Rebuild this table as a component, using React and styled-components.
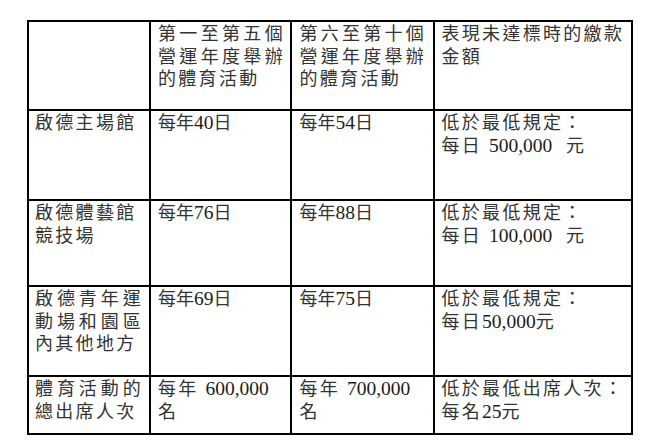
import React from 'react';
import styled, { createGlobalStyle } from 'styled-components';

const GlobalStyle = createGlobalStyle`
  html, body {
    margin: 0;
    padding: 0;
    background: #ffffff;
  }
  body {
    font-family: "Liberation Serif", "Noto Sans CJK TC", serif;
  }
`;

const Page = styled.div`
  box-sizing: border-box;
  width: 665px;
  height: 446px;
  padding: 20px 0 0 27px;
  background: #ffffff;
`;

const Table = styled.div`
  display: grid;
  grid-template-columns: 122px 141px 143px 198px;
  grid-template-rows: 89px 90px 86px 90px 58px;
  box-sizing: border-box;
  width: 606px;
  border-top: 2px solid #000;
  border-left: 2px solid #000;
  font-size: 18px;
  line-height: 22.5px;
  color: #333;
`;

const Cell = styled.div`
  min-width: 0;
  overflow: hidden;
  border-right: 2px solid #000;
  border-bottom: 2px solid #000;
  padding: 1px ${(p) => p.$pr}px 0 ${(p) => p.$pl}px;
  letter-spacing: ${(p) => p.$tracking}px;
`;

const Line = styled.span`
  display: block;
  text-align: ${(p) => (p.$justify ? 'justify' : 'left')};
  text-align-last: ${(p) => (p.$justify ? 'justify' : 'auto')};
`;

const Num = styled.span`
  font-size: 19.5px;
  line-height: 1;
  letter-spacing: 0;
  color: #1a1a1a;
`;

const COLS = [
  { pl: 6, pr: 6 },
  { pl: 7, pr: 5 },
  { pl: 7.5, pr: 7 },
  { pl: 6.5, pr: 4 },
];

const J = (t) => ({ t, j: true });

const ROWS = [
  [
    { lines: [] },
    { lines: [J('第一至第五個'), J('營運年度舉辦'), '的體育活動'] },
    { lines: [J('第六至第十個'), J('營運年度舉辦'), '的體育活動'] },
    { lines: ['表現未達標時的繳款', '金額'] },
  ],
  [
    { lines: ['啟德主場館'] },
    { lines: ['每年40日'], tight: true },
    { lines: ['每年54日'], tight: true },
    { lines: ['低於最低規定：', '每日 500,000\u00a0 元'] },
  ],
  [
    { lines: ['啟德體藝館', '競技場'] },
    { lines: ['每年76日'], tight: true },
    { lines: ['每年88日'], tight: true },
    { lines: ['低於最低規定：', '每日 100,000\u00a0 元'] },
  ],
  [
    { lines: [J('啟德青年運'), J('動場和園區'), '內其他地方'] },
    { lines: ['每年69日'], tight: true },
    { lines: ['每年75日'], tight: true },
    { lines: ['低於最低規定：', '每日50,000元'] },
  ],
  [
    { lines: [J('體育活動的'), '總出席人次'] },
    { lines: ['每年 600,000', '名'] },
    { lines: ['每年 700,000', '名'] },
    { lines: ['低於最低出席人次：', '每名25元'] },
  ],
];

function renderText(str) {
  return str.split(/(\d[\d,]*)/).map((part, i) =>
    /^\d/.test(part) ? <Num key={i}>{part}</Num> : part
  );
}

export default function App() {
  return (
    <Page>
      <GlobalStyle />
      <Table>
        {ROWS.map((row, r) =>
          row.map((cell, c) => (
            <Cell
              key={`${r}-${c}`}
              $pl={COLS[c].pl}
              $pr={COLS[c].pr}
              $tracking={cell.tight ? 0 : 2.3}
            >
              {cell.lines.map((ln, i) => {
                const item = typeof ln === 'string' ? { t: ln, j: false } : ln;
                return (
                  <Line key={i} $justify={item.j}>
                    {renderText(item.t)}
                  </Line>
                );
              })}
            </Cell>
          ))
        )}
      </Table>
    </Page>
  );
}
